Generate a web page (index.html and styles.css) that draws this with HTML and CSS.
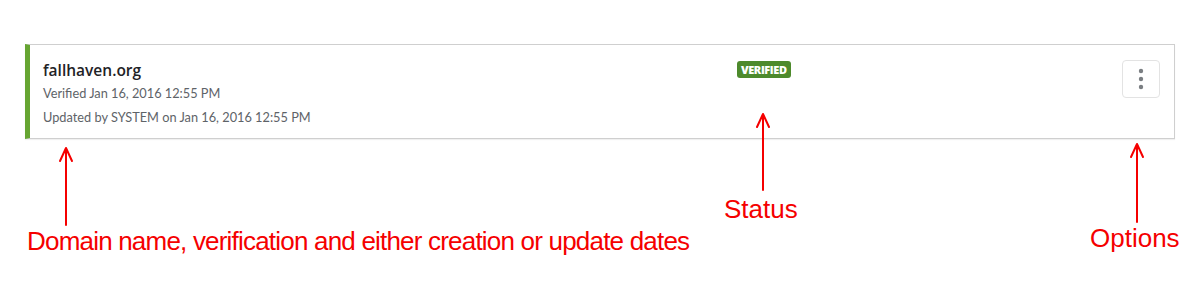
FILE: index.html
```html
<!DOCTYPE html>
<html>
<head>
<meta charset="utf-8">
<link rel="stylesheet" href="styles.css">
</head>
<body>
<div class="page">
  <div class="card">
    <div class="info">
      <div class="domain">fallhaven.org</div>
      <div class="meta">Verified Jan 16, 2016 12:55 PM</div>
      <div class="meta meta-updated">Updated by SYSTEM on Jan 16, 2016 12:55 PM</div>
    </div>
    <div class="status"><span class="badge">VERIFIED</span></div>
    <div class="options">
      <button class="opt-btn" aria-label="Options">
        <svg width="6" height="22" viewBox="0 0 6 22"><circle cx="3" cy="3" r="2.2" fill="#7a7e82"/><circle cx="3" cy="11" r="2.2" fill="#7a7e82"/><circle cx="3" cy="19" r="2.2" fill="#7a7e82"/></svg>
      </button>
    </div>
  </div>

  <svg class="arrows" width="1202" height="285" viewBox="0 0 1202 285">
    <g stroke="#f50000" stroke-width="2" fill="none" stroke-linecap="round" stroke-linejoin="round">
      <path d="M66 225 V148 M60 161 L66 148 L72 161"/>
      <path d="M763 190 V114 M757 127 L763 114 L769 127"/>
      <path d="M1137 222 V144 M1131 157 L1137 144 L1143 157"/>
    </g>
  </svg>
  <div class="label label-domain">Domain name, verification and either creation or update dates</div>
  <div class="label label-status">Status</div>
  <div class="label label-options">Options</div>
</div>
</body>
</html>
```
FILE: styles.css
```css
html, body {
  margin: 0;
  padding: 0;
  background: #ffffff;
}
.page {
  position: relative;
  width: 1202px;
  height: 285px;
  padding-top: 44px;
  box-sizing: border-box;
}
.card {
  margin-left: 25px;
  width: 1150px;
  height: 95px;
  box-sizing: border-box;
  border: 1px solid #cfcfcf;
  border-left: 5px solid #66a532;
  box-shadow: 0 1px 1px rgba(0,0,0,0.06);
  display: flex;
  align-items: flex-start;
  font-family: Lato, "Open Sans", sans-serif;
}
.info {
  width: 694px;
  padding-left: 13px;
  padding-top: 14px;
}
.domain {
  font-family: "Open Sans", Lato, sans-serif;
  font-size: 15.5px;
  font-weight: 600;
  color: #1f2326;
  line-height: 22px;
}
.meta {
  font-size: 12.75px;
  color: #5e6368;
  line-height: 18px;
  margin-top: 3px;
}
.meta-updated {
  margin-top: 6px;
}
.status {
  flex: 1;
  padding-top: 16px;
}
.badge {
  display: block;
  width: max-content;
  background: #4d8a2c;
  color: #ffffff;
  font-family: "Open Sans", Lato, sans-serif;
  font-weight: 800;
  font-size: 11px;
  line-height: 17px;
  padding: 0 4px;
  border-radius: 3px;
  letter-spacing: -0.4px;
}
.options {
  padding-top: 15px;
  padding-right: 14px;
}
.opt-btn {
  width: 38px;
  height: 38px;
  border: 1px solid #e3e3e3;
  border-radius: 4px;
  background: #ffffff;
  display: flex;
  align-items: center;
  justify-content: center;
  padding: 0;
}
.arrows {
  position: absolute;
  left: 0;
  top: 0;
}
.label {
  position: absolute;
  font-family: "Liberation Sans", Arial, sans-serif;
  color: #f50000;
  font-size: 26px;
  line-height: 30px;
  white-space: nowrap;
}
.label-domain { left: 27px; top: 226px; letter-spacing: -0.8px; }
.label-status { left: 724px; top: 194px; }
.label-options { left: 1090px; top: 223px; }
```
